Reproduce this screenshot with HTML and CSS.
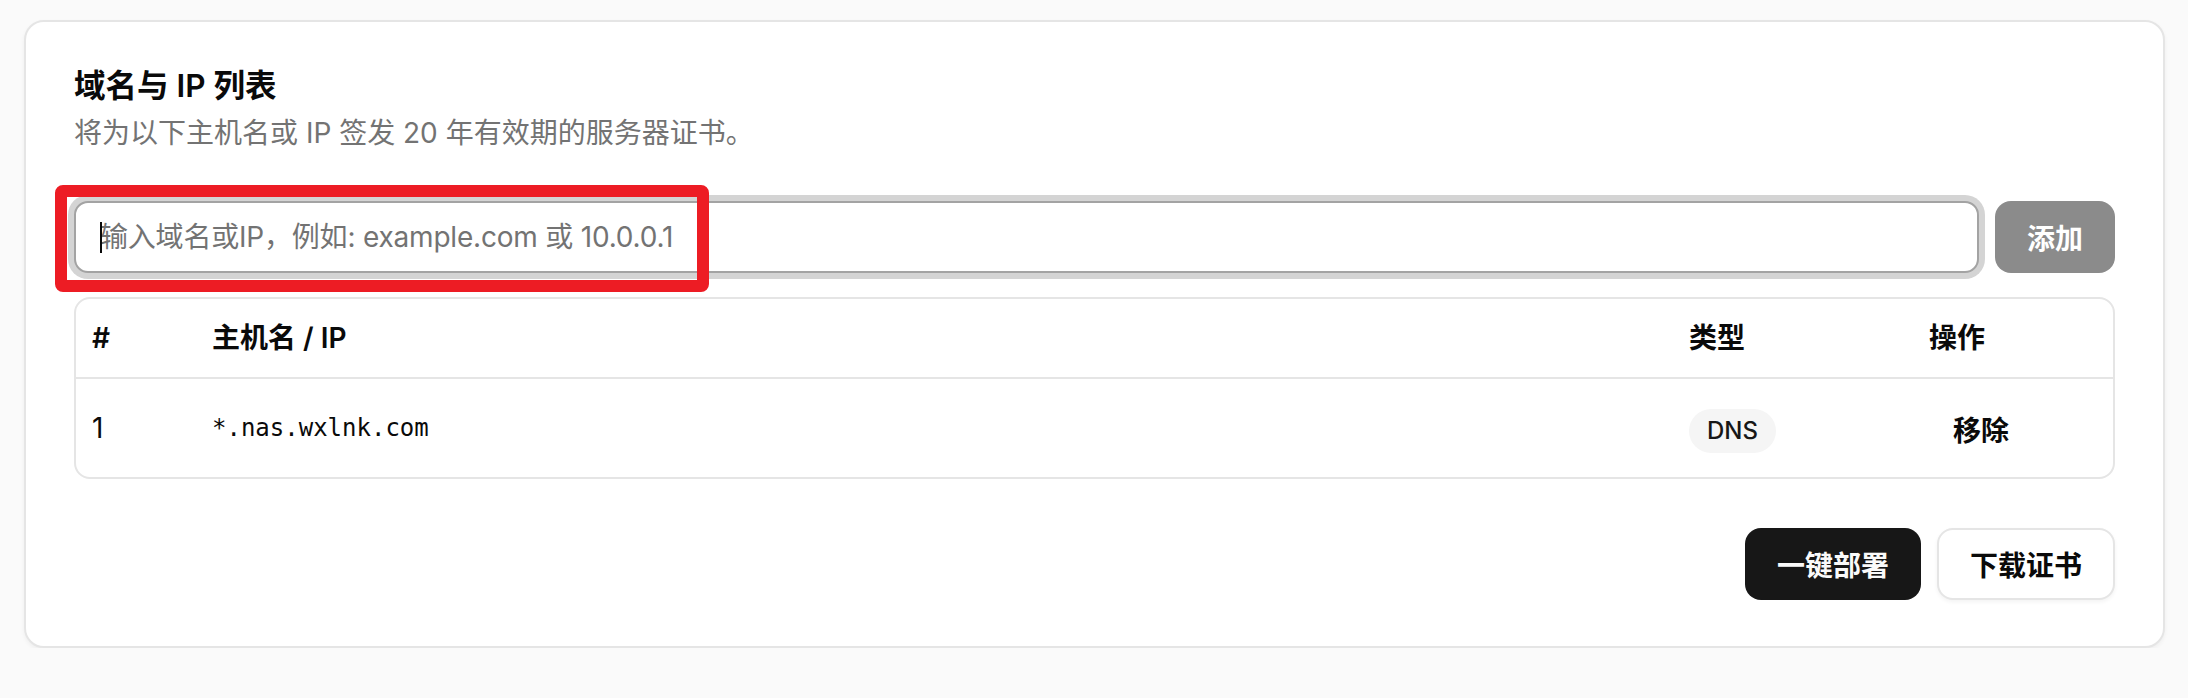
FILE: index.html
```html
<!DOCTYPE html>
<html lang="zh-CN">
<head>
<meta charset="utf-8">
<title>域名与 IP 列表</title>
<link rel="stylesheet" href="styles.css">
</head>
<body>
  <section class="card">
    <h2 class="title">域名与 IP 列表</h2>
    <p class="desc">将为以下主机名或 IP 签发 20 年有效期的服务器证书。</p>

    <div class="add-row">
      <div class="input-wrap">
        <input class="host-input" type="text" placeholder="输入域名或IP，例如: example.com 或 10.0.0.1">
        <span class="caret"></span>
      </div>
      <button class="btn btn-add" type="button">添加</button>
      <div class="annot"></div>
    </div>

    <div class="table-wrap">
      <table class="hosts">
        <colgroup>
          <col class="c-idx">
          <col class="c-host">
          <col class="c-type">
          <col class="c-ops">
        </colgroup>
        <thead>
          <tr>
            <th>#</th>
            <th>主机名 / IP</th>
            <th>类型</th>
            <th>操作</th>
          </tr>
        </thead>
        <tbody>
          <tr>
            <td>1</td>
            <td class="mono">*.nas.wxlnk.com</td>
            <td><span class="badge">DNS</span></td>
            <td><button class="btn btn-ghost" type="button">移除</button></td>
          </tr>
        </tbody>
      </table>
    </div>

    <div class="actions">
      <button class="btn btn-primary" type="button">一键部署</button>
      <button class="btn btn-outline" type="button">下载证书</button>
    </div>
  </section>
</body>
</html>
```
FILE: styles.css
```css
* { box-sizing: border-box; }

html, body {
  margin: 0;
  background: #fafafa;
}

body {
  padding: 20px 23px 0 24px;
  font-family: Inter, "Noto Sans CJK SC", sans-serif;
  color: #0a0a0a;
}

.card {
  position: relative;
  background: #ffffff;
  border: 2px solid #e5e5e5;
  border-radius: 20px;
  box-shadow: 0 2px 4px rgba(0, 0, 0, 0.05);
  padding: 48px 48px 46px 48px;
}

.title {
  margin: 0;
  font-size: 31.5px;
  line-height: 32px;
  font-weight: 600;
  color: #0a0a0a;
}

.desc {
  margin: 10px 0 0 0;
  font-size: 28px;
  line-height: 42px;
  color: #737373;
}

.add-row {
  position: relative;
  display: flex;
  gap: 16px;
  margin-top: 47px;
  height: 72px;
}

.input-wrap {
  position: relative;
  flex: 1;
}

.host-input {
  width: 100%;
  height: 72px;
  border: 2px solid #a3a3a3;
  border-radius: 14px;
  box-shadow: 0 0 0 6px #d4d4d4;
  padding: 0 24px;
  font-family: Inter, "Noto Sans CJK SC", sans-serif;
  font-size: 28px;
  letter-spacing: -0.2px;
  color: #0a0a0a;
  background: #ffffff;
  outline: none;
}

.host-input::placeholder {
  color: #737373;
}

.caret {
  position: absolute;
  left: 26px;
  top: 21px;
  width: 2px;
  height: 31px;
  background: #0a0a0a;
}

.annot {
  position: absolute;
  left: -19px;
  top: -16px;
  width: 654px;
  height: 107px;
  border: 12px solid #ed1c24;
  border-radius: 8px;
  pointer-events: none;
}

.btn {
  font-family: Inter, "Noto Sans CJK SC", sans-serif;
  font-size: 28px;
  font-weight: 600;
  border: none;
  cursor: pointer;
  white-space: nowrap;
}

.btn-add {
  width: 120px;
  height: 72px;
  border-radius: 16px;
  background: #8b8b8b;
  color: #ffffff;
}

.table-wrap {
  margin-top: 24px;
  border: 2px solid #e5e5e5;
  border-radius: 16px;
  overflow: hidden;
}

.hosts {
  width: 100%;
  border-collapse: separate;
  border-spacing: 0;
  table-layout: fixed;
}

.c-idx { width: 120px; }
.c-type { width: 240px; }
.c-ops { width: 200px; }

.hosts th {
  text-align: left;
  font-size: 28px;
  font-weight: 600;
  line-height: 78px;
  padding: 0 16px;
  border-bottom: 2px solid #e5e5e5;
  color: #0a0a0a;
}

.hosts td {
  padding: 16px;
  font-size: 28px;
  line-height: 64px;
  vertical-align: middle;
  color: #0a0a0a;
}

.hosts td.mono {
  font-family: "DejaVu Sans Mono", monospace;
  font-size: 24px;
}

.badge {
  display: inline-block;
  height: 44px;
  line-height: 44px;
  padding: 0 18px;
  border-radius: 22px;
  background: #f5f5f5;
  font-size: 24px;
  font-weight: 500;
  color: #171717;
  vertical-align: middle;
}

.btn-ghost {
  height: 64px;
  padding: 0 24px;
  background: transparent;
  color: #0a0a0a;
  border-radius: 12px;
  vertical-align: middle;
}

.actions {
  display: flex;
  justify-content: flex-end;
  gap: 16px;
  margin-top: 49px;
}

.btn-primary {
  height: 72px;
  padding: 0 32px;
  border-radius: 16px;
  background: #171717;
  color: #fafafa;
}

.btn-outline {
  height: 72px;
  padding: 0 31px;
  border-radius: 16px;
  border: 2px solid #e5e5e5;
  background: #ffffff;
  color: #0a0a0a;
  box-shadow: 0 2px 4px rgba(0, 0, 0, 0.05);
}
```
